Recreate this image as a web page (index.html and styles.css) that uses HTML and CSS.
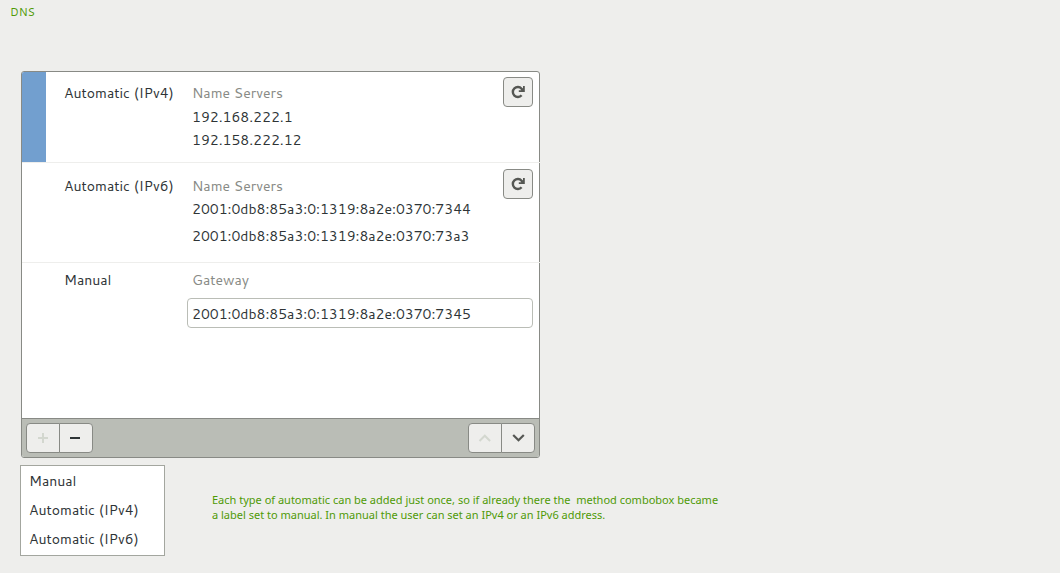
FILE: index.html
```html
<!DOCTYPE html>
<html lang="en">
<head>
<meta charset="utf-8">
<meta name="viewport" content="width=device-width, initial-scale=1">
<title>DNS</title>
<link rel="stylesheet" href="styles.css">
</head>
<body>
<svg class="defs" aria-hidden="true">
  <symbol id="refresh" viewBox="0 0 16 16">
    <path d="M11.6 11.3A5 5 0 1 1 11.6 4.7L12.4 6" fill="none" stroke="currentColor" stroke-width="2.4"/>
    <path d="M14.8 2v6H8.8V6.2h2.4L13 4.4V2z" fill="currentColor"/>
  </symbol>
</svg>
<h1 class="title">DNS</h1>
<main class="content">
  <section class="panel" aria-label="DNS servers">
    <div class="row row-selected">
      <div class="marker"></div>
      <div class="method">Automatic (IPv4)</div>
      <div class="details">
        <div class="caption">Name Servers</div>
        <div class="address">192.168.222.1</div>
        <div class="address">192.158.222.12</div>
      </div>
      <button class="button refresh" type="button" aria-label="Refresh IPv4"><svg class="icon"><use href="#refresh"/></svg></button>
    </div>
    <div class="row row-spaced">
      <div class="marker"></div>
      <div class="method">Automatic (IPv6)</div>
      <div class="details">
        <div class="caption">Name Servers</div>
        <div class="address">2001:0db8:85a3:0:1319:8a2e:0370:7344</div>
        <div class="address address-last">2001:0db8:85a3:0:1319:8a2e:0370:73a3</div>
      </div>
      <button class="button refresh" type="button" aria-label="Refresh IPv6"><svg class="icon"><use href="#refresh"/></svg></button>
    </div>
    <div class="row row-manual">
      <div class="marker"></div>
      <div class="method">Manual</div>
      <div class="details details-form">
        <label class="caption" for="gateway">Gateway</label>
        <input class="field" id="gateway" type="text" value="2001:0db8:85a3:0:1319:8a2e:0370:7345">
      </div>
    </div>
    <div class="toolbar">
      <div class="group">
        <button class="button tool" type="button" aria-label="Add" disabled><svg class="icon" viewBox="0 0 16 16"><path d="M3 8h10M8 3v10" fill="none" stroke="currentColor" stroke-width="2"/></svg></button>
        <button class="button tool tool-remove" type="button" aria-label="Remove"><svg class="icon" viewBox="0 0 16 16"><path d="M2 8h10" fill="none" stroke="currentColor" stroke-width="2"/></svg></button>
      </div>
      <div class="group">
        <button class="button tool" type="button" aria-label="Move up" disabled><svg class="icon" viewBox="0 0 16 16"><path d="M2.500 11l5.300-5.300 5.300 5.300" fill="none" stroke="currentColor" stroke-width="2"/></svg></button>
        <button class="button tool" type="button" aria-label="Move down"><svg class="icon" viewBox="0 0 16 16"><path d="M3.200 5l5.300 5.300 5.300-5.300" fill="none" stroke="currentColor" stroke-width="2.2"/></svg></button>
      </div>
    </div>
  </section>
  <div class="below">
    <ul class="menu">
      <li><button class="option" type="button">Manual</button></li>
      <li><button class="option" type="button">Automatic (IPv4)</button></li>
      <li><button class="option" type="button">Automatic (IPv6)</button></li>
    </ul>
    <p class="note">Each type of automatic can be added just once, so if already there the&nbsp; method combobox became<br>a label set to manual. In manual the user can set an IPv4 or an IPv6 address.</p>
  </div>
</main>
</body>
</html>
```
FILE: styles.css
```css
* { box-sizing: border-box; }

body {
  margin: 0;
  background: #eeeeec;
  color: #2e3436;
  font-family: Cantarell, "Noto Sans", sans-serif;
  font-size: 14px;
  line-height: 24px;
}

.defs { display: none; }

.title {
  margin: 0;
  padding: 4px 10px;
  color: #4e9a06;
  font-size: 11px;
  font-weight: 400;
  line-height: 16px;
}

.content { padding: 47px 20px 16px; }

.panel {
  display: flex;
  flex-direction: column;
  max-width: 519px;
  min-height: 387px;
  margin-left: 1px;
  border: 1px solid #888a85;
  border-radius: 3px;
  background: #fff;
}

.row {
  display: grid;
  grid-template-columns: 24px 128px 1fr 30px;
  min-height: 91px;
  margin-right: -1px;
  padding-right: 7px;
  border-bottom: 1px solid #eeeeec;
}

.row-spaced { min-height: 100px; }

.row-manual {
  flex: 1;
  grid-template-columns: 24px 128px 1fr;
  border-bottom: 0;
}

.row-selected .marker {
  background: #729fcf;
  border-top-left-radius: 2px;
}

.method {
  padding: 9px 0 0 18px;
  white-space: nowrap;
}

.details { padding: 9px 0 8px 18px; }

.row-spaced .method,
.row-spaced .details { padding-top: 11px; }

.row-manual .method,
.row-manual .details { padding-top: 5px; }

.caption {
  display: block;
  color: #888a85;
}

.address { line-height: 23px; }

.row-selected .caption { margin-bottom: 1px; }

.address-last { margin-top: 4px; }

.row-manual .details-form { padding-left: 13px; }

.details-form .caption { padding-left: 5px; }

.field {
  display: block;
  width: 100%;
  height: 30px;
  margin-top: 6px;
  padding: 1px 4px 0;
  border: 1px solid #babdb6;
  border-radius: 4px;
  background: #fff;
  color: inherit;
  font: inherit;
}

.button {
  display: flex;
  align-items: center;
  justify-content: center;
  height: 30px;
  padding: 0;
  border: 1px solid #888a85;
  border-radius: 4px;
  background: #eeeeec;
  color: #555753;
}

.button:disabled { color: #d3d7cf; }

.icon { width: 16px; height: 16px; }

.refresh { width: 30px; margin-top: 5px; }

.row-spaced .refresh { margin-top: 6px; }

.toolbar {
  display: flex;
  justify-content: space-between;
  padding: 4px;
  border-top: 1px solid #888a85;
  border-radius: 0 0 2px 2px;
  background: #babdb6;
}

.group { display: flex; }

.tool { width: 34px; }

.tool:first-child { border-radius: 4px 0 0 4px; }

.tool:last-child {
  margin-left: -1px;
  border-radius: 0 4px 4px 0;
}

.tool-remove { color: #2e3436; }

.below {
  display: flex;
  flex-wrap: wrap;
  align-items: flex-start;
  column-gap: 47px;
  margin-top: 7px;
}

.menu {
  min-width: 145px;
  margin: 0;
  padding: 1px 0;
  border: 1px solid #a3a69f;
  background: #fff;
  list-style: none;
}

.option {
  display: block;
  width: 100%;
  padding: 0 8px;
  border: 0;
  background: none;
  color: inherit;
  font: inherit;
  line-height: 29px;
  text-align: left;
}

.note {
  margin: 27px 0 0;
  color: #4e9a06;
  font-family: "Noto Sans", sans-serif;
  font-size: 11px;
  line-height: 15px;
}
```
